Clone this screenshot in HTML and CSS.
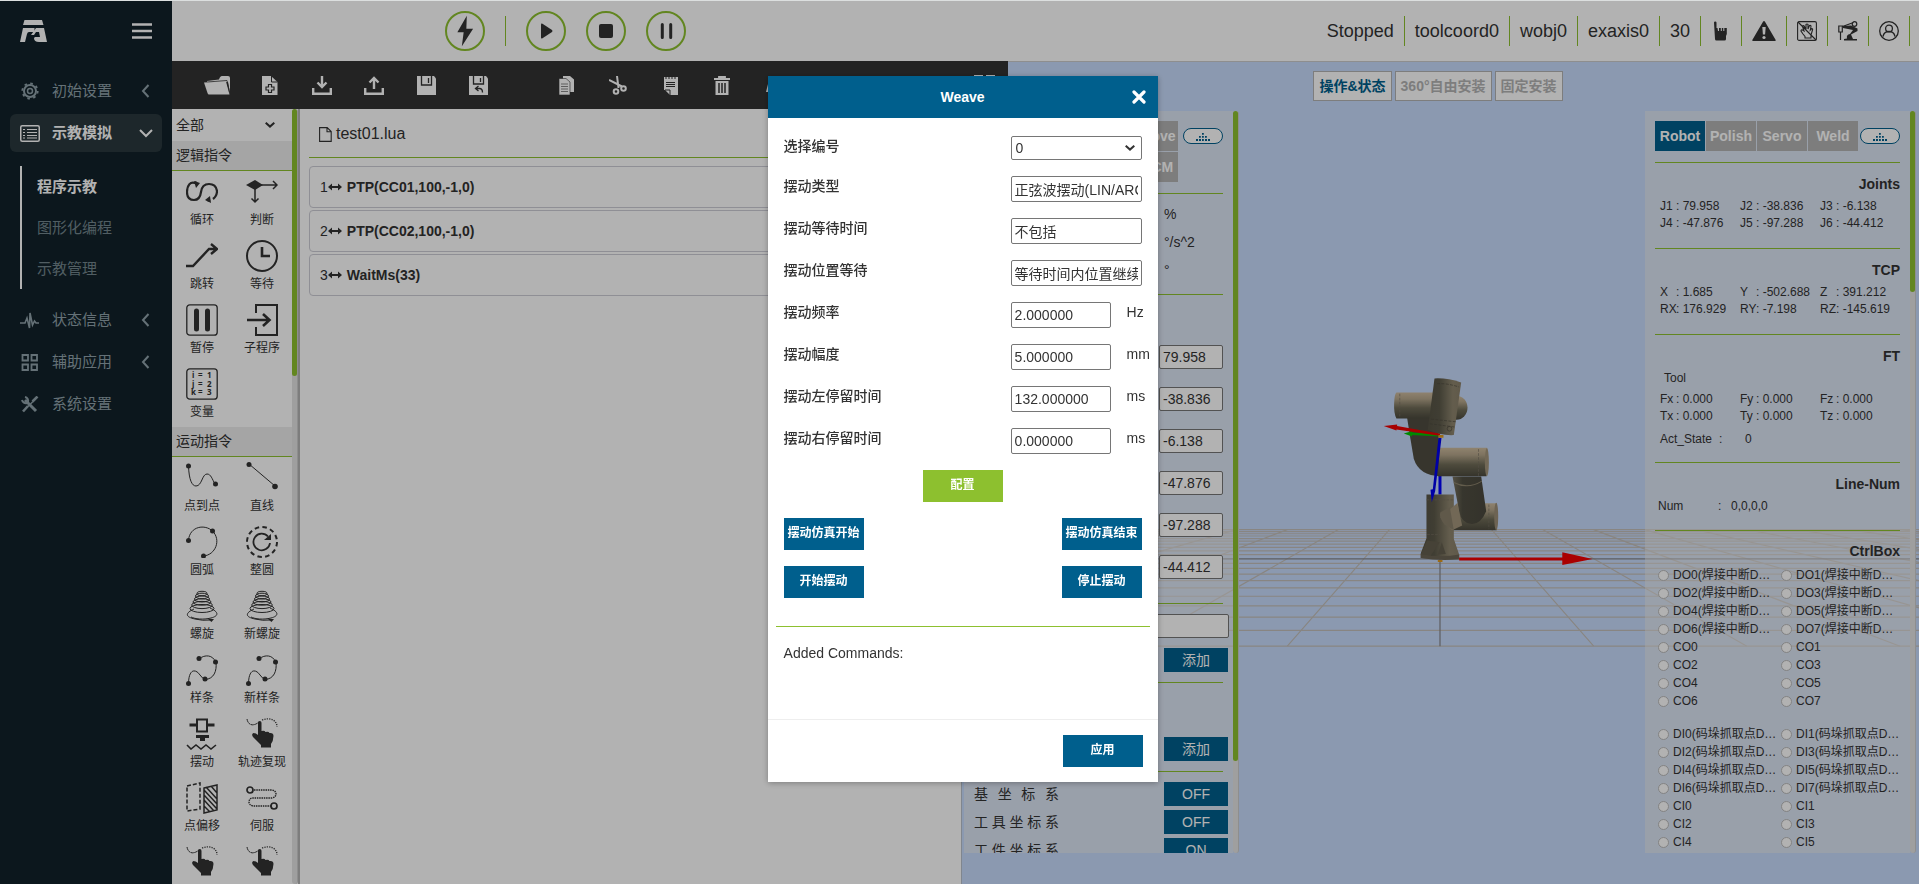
FILE: index.html
```html
<!DOCTYPE html>
<html lang="zh-CN">
<head>
<meta charset="utf-8">
<title>程序示教</title>
<link rel="stylesheet" href="styles.css">
</head>
<body>
<svg class="sprite" aria-hidden="true">
  <symbol id="chev-left" viewBox="0 0 12 14"><path d="M8.500 1 3 7l5.500 6" fill="none" stroke="currentColor" stroke-width="2"/></symbol>
  <symbol id="chev-down" viewBox="0 0 14 10"><path d="M1 2l6 6 6-6" fill="none" stroke="currentColor" stroke-width="2"/></symbol>
  <symbol id="select-arrow" viewBox="0 0 10 6"><path d="M.7.8 5 4.600 9.300.8" fill="none" stroke="currentColor" stroke-width="2"/></symbol>
  <symbol id="finger-path" viewBox="0 0 32 32"><path d="M1 1c1 6 6 8 12 3" fill="none" stroke="currentColor" stroke-width="1" stroke-dasharray="3 .5"/><path d="M16 2c8-3 15 0 15 7" fill="none" stroke="currentColor" stroke-width="1.300" stroke-dasharray="1.200 1.200"/><path d="M12 5q0-2 1.800-2T15.500 5v8q3-1 4 1 3-1 4 1 4-.5 4 3-.2 5-2.500 8v3.500H15V27q-4-4-8-8-2-3 .5-4 2 0 4.500 2z" fill="currentColor"/></symbol>
  <symbol id="spiral" viewBox="0 0 32 32"><g fill="none" stroke="currentColor"><ellipse cx="16" cy="3.500" rx="5" ry="2.200"/><ellipse cx="16" cy="6" rx="6.500" ry="2.800"/><ellipse cx="16" cy="9" rx="7.500" ry="3"/><ellipse cx="16" cy="12" rx="9" ry="3.200"/><ellipse cx="16" cy="15" rx="10.300" ry="3.600"/><ellipse cx="16" cy="18.500" rx="12" ry="4"/><path d="M8 19C-1 23-1 27 9 29q8 2 15 1M24 18c9 4 9 8 1 10-8 2-16 1-20-1"/></g><path d="M22 29h6l-2.500 3z" fill="currentColor"/></symbol>
  <symbol id="spline" viewBox="0 0 32 32"><g fill="none" stroke="currentColor"><path d="M2.500 29C3 14 10 15 14 21q3 4 5 4.500C28 25 31 17 30 8"/><path d="M13 5c6-5 14-4 16.500 3"/></g><g fill="currentColor"><circle cx="2.500" cy="29.500" r="2.500"/><circle cx="19" cy="25" r="2.500"/><circle cx="29.500" cy="8" r="2.500"/><circle cx="13" cy="4.500" r="2.500"/></g></symbol>
  <symbol id="dots" viewBox="0 0 14 9"><g fill="currentColor"><path d="M0 7h2v2H0zM3 7h2v2H3zM6 7h1.800v2H6zM9 7h2v2H9zM12 7h2v2h-2zM3 4h1.800v1.800H3zM6 4h1.800v1.800H6zM9 4h1.800v1.800H9zM6 1h1.800v1.800H6z"/></g></symbol>
</svg>

<div class="app">
  <nav class="sidebar">
    <header class="brand">
      <svg width="27" height="23" viewBox="0 0 27 23"><g fill="currentColor"><path d="M4.500 0h17.500l1.500 5H3z"/><path d="M3 8h11.500v4H9q-1.500 0-2 2l-2 8H0z"/><path d="M16 8h8l3 14h-8q-5 0-5-4l1-1h5l-1-5h-3l-2 3h-3z"/></g></svg>
      <button class="burger" aria-label="菜单"><svg width="20" height="16" viewBox="0 0 20 16"><path d="M0 1.500h20M0 8h20M0 14.500h20" stroke="currentColor" stroke-width="2.600"/></svg></button>
    </header>
    <ul class="menu">
      <li><a href="#" class="menu-link"><svg width="18" height="18" viewBox="0 0 18 18"><circle cx="9" cy="9" r="6" fill="none" stroke="currentColor" stroke-width="2"/><circle cx="9" cy="9" r="2.500" fill="none" stroke="currentColor" stroke-width="1.500"/><circle cx="9" cy="9" r="7.700" fill="none" stroke="currentColor" stroke-width="1.800" stroke-dasharray="2.600 3.450"/></svg><span>初始设置</span><svg class="caret" width="12" height="14"><use href="#chev-left"/></svg></a></li>
      <li><a href="#" class="menu-link active"><svg width="20" height="17" viewBox="0 0 20 17"><rect x=".75" y=".75" width="18.500" height="15.500" rx="1.500" fill="none" stroke="currentColor" stroke-width="1.500"/><path d="M3 4.500h2M3 7.500h2M3 10.500h2M3 13h2M7 4.500h10M7 7.500h10M7 10.500h10M7 13h10" stroke="currentColor" stroke-width="1.100"/></svg><span>示教模拟</span><svg class="caret" width="14" height="10"><use href="#chev-down"/></svg></a>
        <ul class="submenu">
          <li><a href="#" class="current">程序示教</a></li>
          <li><a href="#">图形化编程</a></li>
          <li><a href="#">示教管理</a></li>
        </ul>
      </li>
      <li><a href="#" class="menu-link"><svg width="20" height="17" viewBox="0 0 20 17"><path d="M0 11h5l2-5 2.500 10L10 1l2.500 12 2-4 1.500 2h3" fill="none" stroke="currentColor" stroke-width="1.600"/></svg><span>状态信息</span><svg class="caret" width="12" height="14"><use href="#chev-left"/></svg></a></li>
      <li><a href="#" class="menu-link"><svg width="18" height="17" viewBox="0 0 18 17"><path d="M1.500 1h5.500v5.500H1.500zM10.500 1H16v5.500h-5.500zM1.500 10.500h5.500V16H1.500zM10.500 10.500H16V16h-5.500z" fill="none" stroke="currentColor" stroke-width="1.800"/></svg><span>辅助应用</span><svg class="caret" width="12" height="14"><use href="#chev-left"/></svg></a></li>
      <li><a href="#" class="menu-link"><svg width="18" height="17" viewBox="0 0 18 17"><path d="M4 4l11 11" stroke="currentColor" stroke-width="3"/><path d="M1 4a4 4 0 0 0 5 3M4 1a4 4 0 0 1 3 5" stroke="currentColor" stroke-width="2" fill="none"/><path d="M16.500.5l-5 5M7 10l-5 5.500" stroke="currentColor" stroke-width="2.600"/><path d="M12 5.500l-5 5" stroke="currentColor" stroke-width="1.400"/></svg><span>系统设置</span></a></li>
    </ul>
  </nav>

  <div class="main">
    <header class="topbar">
      <div class="run-controls">
        <button class="round" aria-label="使能"><svg width="18" height="34" viewBox="0 0 20 36"><path d="M12 1 1.500 19.500h7L6.500 35 19 15.500h-7.500z" fill="currentColor"/></svg></button>
        <i class="sep"></i>
        <button class="round" aria-label="运行"><svg width="13" height="16" viewBox="0 0 13 16"><path d="M1 1.500Q1 0 2.500.8L12 7q1 1 0 2l-9.500 6.200Q1 16 1 14.500z" fill="currentColor"/></svg></button>
        <button class="round" aria-label="停止"><svg width="14" height="14" viewBox="0 0 14 14"><rect width="14" height="14" rx="2" fill="currentColor"/></svg></button>
        <button class="round" aria-label="暂停"><svg width="13" height="16" viewBox="0 0 13 16"><path d="M2.300 1.500v13M10.700 1.500v13" stroke="currentColor" stroke-width="3" stroke-linecap="round"/></svg></button>
      </div>
      <ul class="status">
        <li>Stopped</li><li>toolcoord0</li><li>wobj0</li><li>exaxis0</li><li>30</li>
        <li class="ico"><svg width="20" height="20" viewBox="0 0 20 20"><path d="M3 1.500Q3 .5 4.200.5T5.500 1.500V7l1 0 .5 3h1V7h1.800v3h1V7h1.500v3h1V7h2.500v6L15 15v3q0 1.500-1.500 1.500h-8Q4 19.500 4 18z" fill="currentColor"/></svg></li>
        <li class="ico wide"><svg width="24" height="20" viewBox="0 0 24 20"><path d="M12 0q.6 0 1 .7L23.700 19q.3 1-.7 1H1q-1 0-.7-1L11 .7Q11.400 0 12 0z" fill="currentColor"/><path d="M10.300 6h3.400l-.6 7.500h-2.200z" fill="#fff"/><circle cx="12" cy="16.500" r="1.600" fill="#fff"/></svg></li>
        <li class="ico"><svg width="20" height="20" viewBox="0 0 20 20"><g fill="none" stroke="currentColor" stroke-width="1.100"><rect x=".6" y=".6" width="18.800" height="18.800" rx="1.500"/><path d="M1 1l18 18M6 13l-2-3q0-1.500 1.500-1L7 10 5.500 5.500Q6 4 7.200 5L9 8.500V3.500q1-1 2 0V8l1.500-3.500Q14 4 14 5.500L13.300 9l1.500-1.500q1.200 0 .7 1.500L14 14v3H8v-1.500z"/></g></svg></li>
        <li class="ico"><svg width="20" height="20" viewBox="0 0 20 20"><g fill="none" stroke="currentColor" stroke-width="1.200"><path d="M.8 5h3.500v6H.8zM2.500 11v8M4.500 5.500l11-4"/><circle cx="16.500" cy="3" r="2.300"/></g><path d="M5 5l8-.5 6.500 3V10L13 13.500l2 4.500h4v1.500H6V18l3-.5q-1-4 3-4.500l3-4-10-2z" fill="currentColor"/></svg></li>
        <li class="ico"><svg width="20" height="20" viewBox="0 0 20 20"><g fill="none" stroke="currentColor" stroke-width="1.300"><circle cx="10" cy="10" r="9.300"/><circle cx="10" cy="7.500" r="3.400"/><path d="M4 15.500q1-5 6-5t6 5"/></g></svg></li>
      </ul>
    </header>

    <div class="workspace">
      <section class="editor">
        <div class="toolbar">
          <div class="tools">
            <button class="open" aria-label="打开"><svg width="26" height="19" viewBox="0 0 26 19"><path d="M3 5l12-1.500Q16 0 18 0h6q2 0 2 2v15l-2-11-21 1z" fill="currentColor"/><path d="M0 6.500L22 5.500 25.500 18.500H5Q4 18.500 3.500 17z" fill="currentColor"/><path d="M3 6l20-1.500L25.500 16" stroke="#333" stroke-width=".8" fill="none"/></svg></button>
            <button aria-label="新建"><svg width="16" height="19" viewBox="0 0 16 19"><path d="M0 0h9l6.500 6V19H0z" fill="currentColor"/><path d="M9.500 0v6h6" fill="none" stroke="#333"/><path d="M6.500 8.500h3v2.500h2.500v3H9.500v2.500h-3V14H4v-3h2.500z" fill="none" stroke="#333" stroke-width="1.200"/></svg></button>
            <button aria-label="导入"><svg width="20" height="19" viewBox="0 0 20 19"><path d="M1.200 12v5.800h17.600V12M10 0v10M5.500 6.500L10 11l4.500-4.500" fill="none" stroke="currentColor" stroke-width="2.400"/></svg></button>
            <button aria-label="导出"><svg width="20" height="19" viewBox="0 0 20 19"><path d="M1.200 12v5.800h17.600V12M10 13V2.500M5.500 6.500L10 2l4.500 4.500" fill="none" stroke="currentColor" stroke-width="2.400"/></svg></button>
            <button aria-label="保存"><svg width="19" height="19" viewBox="0 0 19 19"><path d="M0 0h17l2 2.500V19H0z" fill="currentColor"/><path d="M4.500 0v9h10V0M11.500 2v5" fill="none" stroke="#333" stroke-width="1.300"/></svg></button>
            <button aria-label="另存为"><svg width="19" height="19" viewBox="0 0 19 19"><path d="M0 0h17l2 2.500V19H0z" fill="currentColor"/><path d="M4.500 0v8h10V0M11.500 2v4M6.500 12.500h4q3 0 3 4M9.500 10l-3 2.500 3 2.500" fill="none" stroke="#333" stroke-width="1.300"/></svg></button>
          </div>
          <i class="tool-sep"></i>
          <div class="tools">
            <button aria-label="复制"><svg width="15" height="19" viewBox="0 0 15 19"><path d="M4 0h7l4 3.500V16H4z" fill="currentColor"/><path d="M0 2.500h7l4 3.500v13H0z" fill="currentColor" stroke="#333" stroke-width=".6"/><path d="M2 8h7M2 10.500h7M2 13h7M2 15.500h7" stroke="#555" stroke-width=".7"/></svg></button>
            <button aria-label="剪切"><svg width="18" height="19" viewBox="0 0 18 19"><g fill="none" stroke="currentColor" stroke-width="2"><path d="M8 0l1.500 12M0 4l13 6.500"/><circle cx="7" cy="15.500" r="2.300"/><circle cx="14.500" cy="12.500" r="2.300"/></g></svg></button>
            <button aria-label="粘贴"><svg width="15" height="19" viewBox="0 0 15 19"><path d="M1 1h14v18H7l-5-5H1z" fill="currentColor"/><path d="M3 0v3M6 0v3M9 0v3M12 0v3M3 6.500h9M3 8.500h9M3 10.500h9M2 14h5v5" stroke="#333" fill="none"/></svg></button>
            <button aria-label="删除"><svg width="16" height="19" viewBox="0 0 16 19"><path d="M0 3h16M5 2.500V1h6v1.500" stroke="currentColor" stroke-width="1.800" fill="none"/><path d="M1.500 5h13v14h-13z" fill="currentColor"/><path d="M5 7v10M8 7v10M11 7v10" stroke="#333" stroke-width="1.500"/></svg></button>
            <button aria-label="撤销"><svg width="16" height="19" viewBox="0 0 16 19"><path d="M8 0l4 4H4zM2 8q6-6 12 0v8H0z" fill="currentColor"/></svg></button>
            <button aria-label="列表"><svg width="14" height="19" viewBox="0 0 14 19"><path d="M1 1h12v17H1z" stroke="currentColor" stroke-width="2" fill="none"/></svg></button>
          </div>
          <i class="tool-sep"></i>
          <div class="tools last">
            <button aria-label="上移"><svg width="16" height="19" viewBox="0 0 16 19"><path d="M8 0l5 6H3zM7 5h2v14H7z" fill="currentColor"/></svg></button>
            <button aria-label="布局"><svg width="21" height="21" viewBox="0 0 21 21"><path d="M0 0h9v8H0zM12 0h9v8h-9zM0 12h9v8H0zM12 12h9v8h-9z" fill="currentColor"/></svg></button>
          </div>
        </div>

        <div class="editor-body">
          <div class="palette">
            <div class="select-wrap filter">
              <select aria-label="指令分类"><option>全部</option></select>
              <svg width="10" height="6"><use href="#select-arrow"/></svg>
            </div>
            <h2>逻辑指令</h2>
            <div class="commands">
              <button><svg viewBox="0 0 32 32"><path d="M11 8C4 4 1 10 1 16q0 8 7 8 6 0 7-8 1-8 8-8 7 0 8 7 0 5-4 8M11 7.500L9 6M21 24l3 1" fill="none" stroke="currentColor" stroke-width="2.200"/><path d="M8 5l6 2-4 5zM24 20l-5 4 6 3z" fill="currentColor"/></svg>循环</button>
              <button><svg viewBox="0 0 32 32"><path d="M9 4l8 5-8 5-9-5z" fill="currentColor"/><path d="M15 9h16M27 5l4 4-4 4M9 13v13M5.500 22.500L9 26l3.500-3.500" fill="none" stroke="currentColor" stroke-width="1.500"/></svg>判断</button>
              <button><svg viewBox="0 0 32 32"><path d="M0 26h7L23 9h7M25 4l6 5-6 5" fill="none" stroke="currentColor" stroke-width="2.400"/></svg>跳转</button>
              <button><svg viewBox="0 0 32 32"><circle cx="16" cy="16" r="15" fill="none" stroke="currentColor" stroke-width="2"/><path d="M16 7v9h8" fill="none" stroke="currentColor" stroke-width="2.600"/></svg>等待</button>
              <button><svg viewBox="0 0 32 32"><rect x=".8" y=".8" width="30.400" height="30.400" rx="3" fill="none" stroke="currentColor" stroke-width="1.300"/><path d="M10.500 7v18M21.500 7v18" stroke="currentColor" stroke-width="5" stroke-linecap="round"/></svg>暂停</button>
              <button><svg viewBox="0 0 32 32"><path d="M10 9V1h21v30H10v-8" fill="none" stroke="currentColor" stroke-width="2"/><path d="M1 16h22M17 10l6.500 6-6.500 6" fill="none" stroke="currentColor" stroke-width="2.600"/></svg>子程序</button>
              <button><svg viewBox="0 0 32 32"><rect x=".8" y=".8" width="30.400" height="30.400" rx="3" fill="none" stroke="currentColor" stroke-width="1.300"/><g font-family="Noto Sans" font-size="8" font-weight="700" fill="currentColor"><text x="6" y="10">i</text><text x="12" y="10">=</text><text x="21" y="10">1</text><text x="6" y="19">j</text><text x="12" y="19">=</text><text x="21" y="19">2</text><text x="5" y="27">k</text><text x="12" y="27">=</text><text x="21" y="27">3</text></g></svg>变量</button>
            </div>
            <h2>运动指令</h2>
            <div class="commands">
              <button><svg viewBox="0 0 32 32"><path d="M2.500 4C3 18 6 24 10 24c6 0 6-12 11-12 4 0 5 5 8 10" fill="none" stroke="currentColor"/><circle cx="2.500" cy="4" r="2.500" fill="currentColor"/><circle cx="29.500" cy="22" r="2.500" fill="currentColor"/></svg>点到点</button>
              <button><svg viewBox="0 0 32 32"><path d="M3 2l26 22" stroke="currentColor"/><circle cx="3" cy="2.500" r="2.500" fill="currentColor"/><circle cx="29" cy="24.500" r="2.800" fill="currentColor"/></svg>直线</button>
              <button><svg viewBox="0 0 32 32"><path d="M2.500 14C4 0 19-2 26.500 5c9 9 3 24-9 25" fill="none" stroke="currentColor"/><circle cx="2.500" cy="14.500" r="2.500" fill="currentColor"/><circle cx="26.500" cy="5" r="2.500" fill="currentColor"/><circle cx="17.500" cy="30" r="2.500" fill="currentColor"/></svg>圆弧</button>
              <button><svg viewBox="0 0 32 32"><circle cx="16" cy="16" r="15" fill="none" stroke="currentColor" stroke-width="2" stroke-dasharray="4.500 3.350"/><path d="M22 10.500A8.300 8.300 0 1 0 24 17" fill="none" stroke="currentColor" stroke-width="1.800"/><path d="M25 8v6h-7z" fill="currentColor"/></svg>整圆</button>
              <button><svg><use href="#spiral"/></svg>螺旋</button>
              <button><svg><use href="#spiral"/></svg>新螺旋</button>
              <button><svg><use href="#spline"/></svg>样条</button>
              <button><svg><use href="#spline"/></svg>新样条</button>
              <button><svg viewBox="0 0 32 32"><path d="M11 1.500h10v12H11z" fill="none" stroke="currentColor" stroke-width="2"/><path d="M3.500 7H10M22 7h6.500" stroke="currentColor" stroke-width="3"/><path d="M10 17h13v3h-4v3h-5v-3h-4z" fill="currentColor"/><path d="M1 27l4 4 5-4 5 4 5-4 5 4 5-4" fill="none" stroke="currentColor" stroke-width="1.600"/></svg>摆动</button>
              <button><svg><use href="#finger-path"/></svg>轨迹复现</button>
              <button><svg viewBox="0 0 32 32"><path d="M1 4l13-3v26L1 29z" fill="none" stroke="currentColor" stroke-width="1.500" stroke-dasharray="4 2"/><path d="M18 6l13-3v25l-13 3zM18 8l13 14M18 13l13 14M18 18l10 11M18 24l6 6M20 5l11 12M25 4l6 7" fill="none" stroke="currentColor" stroke-width="1.500"/></svg>点偏移</button>
              <button><svg viewBox="0 0 32 32"><circle cx="4" cy="8" r="3" fill="none" stroke="currentColor" stroke-width="1.700"/><circle cx="28" cy="24" r="3" fill="none" stroke="currentColor" stroke-width="1.700"/><path d="M8 8h18q4 1 4 4t-4 4H6q-3 1-3 4t4 4h18" fill="none" stroke="currentColor" stroke-width="1.400" stroke-dasharray="1.500 .8"/></svg>伺服</button>
              <button aria-label="轨迹"><svg><use href="#finger-path"/></svg></button>
              <button aria-label="轨迹"><svg><use href="#finger-path"/></svg></button>
            </div>
          </div>
          <div class="track"><div class="thumb thumb-palette"></div></div>
          <div class="code">
            <h1 class="file"><svg width="13" height="15" viewBox="0 0 13 15"><path d="M.6.6h7.600l4 4v9.800H.6zM8 .6v4.200h4.200" fill="none" stroke="currentColor" stroke-width="1.100"/></svg>test01.lua</h1>
            <ol class="lines">
              <li>1<svg width="14" height="8"><path d="M2 4h10" stroke="currentColor" stroke-width="2"/><path d="M4 .5v7L0 4zM10 .5v7L14 4z" fill="currentColor"/></svg><b>PTP(CC01,100,-1,0)</b></li>
              <li>2<svg width="14" height="8"><path d="M2 4h10" stroke="currentColor" stroke-width="2"/><path d="M4 .5v7L0 4zM10 .5v7L14 4z" fill="currentColor"/></svg><b>PTP(CC02,100,-1,0)</b></li>
              <li>3<svg width="14" height="8"><path d="M2 4h10" stroke="currentColor" stroke-width="2"/><path d="M4 .5v7L0 4zM10 .5v7L14 4z" fill="currentColor"/></svg><b>WaitMs(33)</b></li>
            </ol>
          </div>
        </div>
      </section>

      <section class="stage">
        <svg class="scene" viewBox="0 0 958 821" preserveAspectRatio="xMidYMid slice" aria-hidden="true">
          <defs>
            <linearGradient id="tubeH" x1="0" y1="0" x2="0" y2="1"><stop offset="0" stop-color="#cdbb9e"/><stop offset=".25" stop-color="#b5a68b"/><stop offset=".6" stop-color="#6f6b57"/><stop offset="1" stop-color="#4d4b3f"/></linearGradient>
            <linearGradient id="tubeV" x1="0" y1="0" x2="1" y2="0"><stop offset="0" stop-color="#565345"/><stop offset=".35" stop-color="#5c594a"/><stop offset=".75" stop-color="#8f866f"/><stop offset="1" stop-color="#8a806a"/></linearGradient>
            <linearGradient id="tubeD" x1="0" y1="0" x2="1" y2="0"><stop offset="0" stop-color="#787260"/><stop offset=".3" stop-color="#504e42"/><stop offset="1" stop-color="#4b493e"/></linearGradient>
          </defs>
          <g stroke="#c3bfba" stroke-width="1.200" fill="none">
            <path d="M-600 583.500H1600M-600 567.600H1600M-600 554.400H1600M-600 543.200H1600M-600 533.600H1600M-600 525.300H1600M-600 518H1600M-600 511.500H1600M-600 505.800H1600M-600 500.800H1600M-600 492H1600M-600 488.200H1600M-600 484.800H1600M-600 481.500H1600M-600 478.600H1600M-600 476H1600M-600 473.400H1600M-600 471.200H1600M-600 469H1600M-600 467H1600"/>
            <path d="M428 467L326 583.500M377 467L173 583.500M326 467L20 583.500M275 467L-133 583.500M224 467L-286 583.500M173 467L-439 583.500M122 467L-592 583.500M71 467L-745 583.500M20 467L-898 583.500M530 467L632 583.500M581 467L785 583.500M632 467L938 583.500M683 467L1091 583.500M734 467L1244 583.500M785 467L1397 583.500M836 467L1550 583.500M887 467L1703 583.500M938 467L1856 583.500"/>
          </g>
          <path d="M-600 496.200H1600M478.500 467V583.500" stroke="#85858a" stroke-width="1.200" fill="none"/>
          <g transform="translate(279 298) scale(.3333)">
            <path d="M594 346h9v56h-9z" fill="#00f"/>
            <ellipse cx="648" cy="142" rx="33" ry="36" fill="url(#tubeH)"/>
            <path d="M500 172L510 236 520 295Q536 346 600 347L598 262 588 172z" fill="#504d41"/>
            <path d="M468 96H582V174H468Q460 160 461 130T468 96z" fill="url(#tubeH)"/>
            <path d="M598 262H740Q746 300 738 347H592z" fill="url(#tubeH)"/><ellipse cx="739" cy="305" rx="6" ry="42" fill="#a4967c"/>
            <path d="M600 500L650 428H768Q775 466 768 509H635z" fill="url(#tubeH)"/><ellipse cx="767" cy="468" rx="6" ry="41" fill="#9c8f77"/>
            <path d="M558 402H640V535L656 582V596L541 592V578L558 533z" fill="url(#tubeV)"/>
            <path d="M600 470L650 428 665 495 635 509z" fill="#a4967c"/>
            <path d="M640 509L612 492Q594 470 600 455L628 440z" fill="#8a806b"/>
            <path d="M598 545L570 586 541 580 560 540zM604 545L616 580 592 582z" fill="#655f4f"/>
            <path d="M541 580Q598 592 656 582V596Q598 602 541 592z" fill="#6c6555"/>
            <path d="M636 348H722L737 452Q720 492 693 490 662 488 656 452z" fill="url(#tubeD)"/>
            <path d="M640 366Q682 388 724 362" fill="none" stroke="#8f866f" stroke-width="3"/>
            <path d="M558 418H640M560 522H598M714 266V346M745 432V506M478 100V172" stroke="#777060" stroke-width="2" stroke-dasharray="8 4" fill="none"/>
            <path d="M582 54Q620 52 662 66L640 224Q600 226 562 208z" fill="url(#tubeV)"/>
            <path d="M590 70Q620 68 656 80M572 176L646 184M568 190L644 200" fill="none" stroke="#4d4a3e" stroke-width="2" stroke-dasharray="9 4"/><circle cx="627" cy="205" r="7" fill="none" stroke="#4d4a3e" stroke-width="2"/>
            <path d="M598 228L515 224V228L490 219 516 212V216L598 220z" fill="#00c400"/>
            <path d="M596 226L468 207V210L430 197 470 192V197L600 220z" fill="#f00000"/>
            <path d="M594 232L603 233 584 392 574 425 570 388 577 386z" fill="#0000ee"/>
            <path d="M594 224h15v8h-15zM592 598h14v6h-14z" fill="#e09a20"/>
            <path d="M656 591H965V575L1056 595 965 613V600H656z" fill="#f40000"/>
          </g>
        </svg>

        <div class="panel-wrap">
          <div class="panel operate">
            <div class="tabs-row">
              <div class="tabs"><button>EMove</button><button>RTCM</button></div>
              <button class="pill" aria-label="收起"><svg width="14" height="9"><use href="#dots"/></svg></button>
            </div>
            <hr>
            <ul class="units"><li>%</li><li>°/s^2</li><li>°</li></ul>
            <hr>
            <div class="joint-inputs">
              <input aria-label="J1" value="79.958"><input aria-label="J2" value="-38.836"><input aria-label="J3" value="-6.138"><input aria-label="J4" value="-47.876"><input aria-label="J5" value="-97.288"><input aria-label="J6" value="-44.412">
            </div>
            <hr>
            <input class="name" aria-label="名称">
            <button class="small">添加</button>
            <hr>
            <button class="small second">添加</button>
            <hr>
            <div class="toggle-row"><span>基坐标系</span><button class="small">OFF</button></div>
            <div class="toggle-row"><span>工具坐标系</span><button class="small">OFF</button></div>
            <div class="toggle-row"><span>工件坐标系</span><button class="small">ON</button></div>
          </div>
          <div class="track"><div class="thumb thumb-operate"></div></div>
        </div>

        <div class="modes">
          <button class="on">操作&amp;状态</button><button>360°自由安装</button><button>固定安装</button>
        </div>

        <div class="panel-wrap">
          <div class="panel monitor">
            <div class="tabs-row">
              <div class="tabs"><button class="on">Robot</button><button>Polish</button><button>Servo</button><button>Weld</button></div>
              <button class="pill" aria-label="收起"><svg width="14" height="9"><use href="#dots"/></svg></button>
            </div>
            <section><h3>Joints</h3>
              <dl class="trio"><div><dt>J1</dt><dd>79.958</dd></div><div><dt>J2</dt><dd>-38.836</dd></div><div><dt>J3</dt><dd>-6.138</dd></div><div><dt>J4</dt><dd>-47.876</dd></div><div><dt>J5</dt><dd>-97.288</dd></div><div><dt>J6</dt><dd>-44.412</dd></div></dl>
            </section>
            <section><h3>TCP</h3>
              <dl class="trio"><div><dt>X</dt><dd>1.685</dd></div><div><dt>Y</dt><dd>-502.688</dd></div><div><dt>Z</dt><dd>391.212</dd></div><div><dt>RX</dt><dd>176.929</dd></div><div><dt>RY</dt><dd>-7.198</dd></div><div><dt>RZ</dt><dd>-145.619</dd></div></dl>
            </section>
            <section class="ft"><h3>FT</h3>
              <p class="tool">Tool</p>
              <dl class="trio"><div><dt>Fx</dt><dd>0.000</dd></div><div><dt>Fy</dt><dd>0.000</dd></div><div><dt>Fz</dt><dd>0.000</dd></div><div><dt>Tx</dt><dd>0.000</dd></div><div><dt>Ty</dt><dd>0.000</dd></div><div><dt>Tz</dt><dd>0.000</dd></div></dl>
              <dl class="act"><dt>Act_State</dt><dd>0</dd></dl>
            </section>
            <section class="num"><h3>Line-Num</h3>
              <dl class="line-num"><dt>Num</dt><dd>0,0,0,0</dd></dl>
            </section>
            <section class="box"><h3>CtrlBox</h3>
              <div class="io">
                <label><input type="radio">DO0(焊接中断D…</label><label><input type="radio">DO1(焊接中断D…</label>
                <label><input type="radio">DO2(焊接中断D…</label><label><input type="radio">DO3(焊接中断D…</label>
                <label><input type="radio">DO4(焊接中断D…</label><label><input type="radio">DO5(焊接中断D…</label>
                <label><input type="radio">DO6(焊接中断D…</label><label><input type="radio">DO7(焊接中断D…</label>
                <label><input type="radio">CO0</label><label><input type="radio">CO1</label>
                <label><input type="radio">CO2</label><label><input type="radio">CO3</label>
                <label><input type="radio">CO4</label><label><input type="radio">CO5</label>
                <label><input type="radio">CO6</label><label><input type="radio">CO7</label>
              </div>
              <div class="io">
                <label><input type="radio">DI0(码垛抓取点D…</label><label><input type="radio">DI1(码垛抓取点D…</label>
                <label><input type="radio">DI2(码垛抓取点D…</label><label><input type="radio">DI3(码垛抓取点D…</label>
                <label><input type="radio">DI4(码垛抓取点D…</label><label><input type="radio">DI5(码垛抓取点D…</label>
                <label><input type="radio">DI6(码垛抓取点D…</label><label><input type="radio">DI7(码垛抓取点D…</label>
                <label><input type="radio">CI0</label><label><input type="radio">CI1</label>
                <label><input type="radio">CI2</label><label><input type="radio">CI3</label>
                <label><input type="radio">CI4</label><label><input type="radio">CI5</label>
              </div>
            </section>
          </div>
          <div class="track"><div class="thumb thumb-monitor"></div></div>
        </div>
      </section>
    </div>
  </div>
</div>

<div class="backdrop"></div>

<div class="modal" role="dialog" aria-labelledby="weave-title">
  <header class="modal-head"><h2 id="weave-title">Weave</h2>
    <button class="close" aria-label="关闭"><svg width="14" height="14" viewBox="0 0 14 14"><path d="M2 2l10 10M12 2L2 12" stroke="currentColor" stroke-width="3.200" stroke-linecap="round"/></svg></button>
  </header>
  <form class="modal-body">
    <div class="row"><label for="w0">选择编号</label><div class="field"><div class="select-wrap number"><select id="w0"><option>0</option></select><svg width="10" height="6"><use href="#select-arrow"/></svg></div></div></div>
    <div class="row"><label for="w1">摆动类型</label><div class="field"><input id="w1" class="long" value="正弦波摆动(LIN/ARC)"></div></div>
    <div class="row"><label for="w2">摆动等待时间</label><div class="field"><input id="w2" class="long" value="不包括"></div></div>
    <div class="row"><label for="w3">摆动位置等待</label><div class="field"><input id="w3" class="long" value="等待时间内位置继续移动"></div></div>
    <div class="row"><label for="w4">摆动频率</label><div class="field"><input id="w4" value="2.000000"><span>Hz</span></div></div>
    <div class="row"><label for="w5">摆动幅度</label><div class="field"><input id="w5" value="5.000000"><span>mm</span></div></div>
    <div class="row"><label for="w6">摆动左停留时间</label><div class="field"><input id="w6" value="132.000000"><span>ms</span></div></div>
    <div class="row"><label for="w7">摆动右停留时间</label><div class="field"><input id="w7" value="0.000000"><span>ms</span></div></div>
    <div class="actions center"><button type="button" class="btn green">配置</button></div>
    <div class="actions"><button type="button" class="btn">摆动仿真开始</button><button type="button" class="btn">摆动仿真结束</button></div>
    <div class="actions"><button type="button" class="btn">开始摆动</button><button type="button" class="btn">停止摆动</button></div>
    <hr>
    <p class="added">Added Commands:</p>
  </form>
  <footer class="modal-foot"><button type="button" class="btn">应用</button></footer>
</div>
</body>
</html>
```
FILE: styles.css
```css
* { box-sizing: border-box; margin: 0; padding: 0; }

:root {
  --green: #8dc02f;
  --blue: #005f8d;
  --ink: #333;
}

body {
  font: 14px/20px "Liberation Sans", "Noto Sans CJK SC", sans-serif;
  color: var(--ink);
  background: #fff;
  overflow: hidden;
}

button, input, select { font: inherit; color: inherit; border-radius: 0; }
button { background: none; border: 0; cursor: pointer; }
ul, ol { list-style: none; }
a { color: inherit; text-decoration: none; }
hr { border: 0; border-top: 1px solid var(--green); }
svg { display: block; flex: none; }
.sprite { position: absolute; width: 0; height: 0; }

.app {
  display: flex;
  height: 100vh;
  border-top: 1px solid #dcdfdf;
}

/* Sidebar */
.sidebar {
  flex: 0 0 172px;
  background: #12222a;
  color: #91a3ab;
}
.brand {
  display: flex;
  align-items: center;
  justify-content: space-between;
  height: 60px;
  padding: 0 20px;
  color: #fff;
}
.burger { color: #fff; }
.menu {
  padding: 11px 10px;
  display: flex;
  flex-direction: column;
  gap: 4px;
}
.menu-link {
  display: grid;
  grid-template-columns: 20px 1fr 14px;
  column-gap: 12px;
  align-items: center;
  height: 38px;
  padding: 0 9px 0 10px;
  border-radius: 6px;
  font-size: 15px;
}
.menu-link > svg { justify-self: center; }
.menu-link.active { background: #2a393e; color: #fff; font-weight: 700; }
.submenu {
  margin: 14px 0 8px 10px;
  padding-left: 15px;
  border-left: 2px solid #fff;
  color: #75878f;
  font-size: 15px;
}
.submenu a { display: block; line-height: 41px; }
.submenu .current { color: #fff; font-weight: 700; }

/* Top bar */
.main { flex: 1; min-width: 0; display: flex; flex-direction: column; }
.topbar {
  display: flex;
  flex: 0 0 60px;
  align-items: center;
  justify-content: space-between;
  padding: 0 9px 0 273px;
}
.run-controls { display: flex; align-items: center; gap: 20px; }
.round {
  display: grid;
  place-items: center;
  width: 40px;
  height: 40px;
  border: 2px solid var(--green);
  border-radius: 50%;
}
.sep { width: 1px; height: 30px; background: var(--green); }
.status { display: flex; font-size: 18px; }
.status li {
  display: flex;
  align-items: center;
  height: 30px;
  padding: 0 10px;
  border-right: 1px solid var(--green);
}

/* Workspace */
.workspace {
  flex: 1;
  min-height: 0;
  display: grid;
  grid-template-columns: 789fr 958fr;
}
.editor { display: flex; flex-direction: column; min-width: 0; min-height: 0; }
.toolbar {
  position: relative;
  z-index: 1;
  display: flex;
  align-items: center;
  flex: 0 0 48px;
  width: 106%;
  padding-left: 17px;
  background: #333;
  color: #fff;
}
.tools { display: flex; }
.tools button {
  display: grid;
  place-items: center;
  width: 52px;
  height: 32px;
  color: #fff;
}
.tools .open { width: 55px; }
.tools.last { padding-left: 6px; }
.tools.last button { width: 60px; }
.tool-sep { width: 1px; height: 32px; margin: 0 18px; background: #fff; }

.editor-body { flex: 1; min-height: 0; display: flex; }
.palette { flex: 0 0 120px; overflow: hidden; }
.select-wrap { position: relative; }
.select-wrap select { appearance: none; width: 100%; background: #fff; }
.select-wrap svg { position: absolute; right: 7px; top: 50%; margin-top: -3px; pointer-events: none; }
.filter select { height: 32px; border: 0; padding-left: 4px; }
.filter svg { right: 17px; }
.palette h2 {
  height: 30px;
  padding-left: 4px;
  background: #ececec;
  border-bottom: 1px solid var(--green);
  font-size: 14px;
  font-weight: 400;
  line-height: 28px;
}
.commands { display: grid; grid-template-columns: 1fr 1fr; }
.commands button {
  display: flex;
  flex-direction: column;
  align-items: center;
  height: 64px;
  padding-top: 5px;
  font-size: 12px;
  line-height: 24px;
  white-space: nowrap;
}
.commands svg { width: 32px; height: 32px; }
.track {
  flex: 0 0 5px;
  background: #e4e4e4;
  border-right: 1px solid #ccc;
  border-radius: 3px;
}
.thumb { width: 5px; border-radius: 3px; background: var(--green); }
.thumb-palette { height: 267px; }
.thumb-operate { height: 650px; }
.thumb-monitor { height: 181px; }

.code { flex: 1; border-left: 2px solid #b4b4b4; padding: 0 10px 0 9px; }
.file {
  display: flex;
  align-items: center;
  gap: 4px;
  height: 49px;
  padding: 2px 0 0 10px;
  border-bottom: 1px solid var(--green);
  font-size: 16px;
  font-weight: 400;
}
.lines { display: grid; gap: 2px; padding-top: 8px; }
.lines li {
  display: flex;
  align-items: center;
  height: 42px;
  padding-left: 10px;
  border: 1px solid #cdcdd6;
  border-radius: 4px;
}
.lines b { margin-left: 5px; }

/* 3D stage */
.stage {
  position: relative;
  display: flex;
  justify-content: space-between;
  min-width: 0;
  min-height: 0;
  padding: 0 3px 31px 2px;
  background: #c8dcfd;
  border-top: 1px solid #ccc;
  border-left: 1px solid #b8c0cc;
}
.scene { position: absolute; inset: 0; width: 100%; height: 100%; }
.panel-wrap { position: relative; display: flex; margin-top: 49px; }
.panel { overflow: hidden; background: rgba(240, 238, 236, .5); }
.operate { width: 269px; padding: 10px 5px 0 10px; }
.operate hr { margin-right: 5px; }
.tabs-row { display: flex; align-items: center; justify-content: space-between; }
.tabs { display: flex; gap: 1px; }
.tabs button {
  width: 50px;
  height: 30px;
  background: #b4b4b4;
  color: #fff;
  font-weight: 700;
}
.tabs .on { background: var(--blue); }
.pill {
  display: grid;
  place-items: center;
  width: 40px;
  height: 16px;
  border: 1px solid var(--blue);
  border-radius: 8px;
  background: #fff;
  color: var(--blue);
}
.operate .tabs-row { align-items: flex-start; justify-content: flex-end; gap: 5px; padding-right: 5px; margin-bottom: 11px; }
.operate .tabs { flex-direction: column; }
.operate .pill { margin-top: 7px; }
.units { width: 64px; margin: 6px 0 10px auto; line-height: 28px; }
.operate input { display: block; border: 1px solid #767676; border-radius: 2px; background: #fff; height: 24px; padding: 0 3px; }
.joint-inputs { display: grid; gap: 18px; width: 64px; margin: 50px 5px 24px auto; }
.joint-inputs input { width: 64px; }
.operate .name { width: 120px; margin: 10px -1px 10px auto; }
.small { display: block; width: 64px; height: 24px; margin: 0 0 10px auto; background: var(--blue); color: #fff; }
.small.second { margin-top: 54px; }
.operate hr:last-of-type { margin-bottom: 10px; }
.toggle-row { display: flex; justify-content: space-between; height: 28px; }
.toggle-row span { width: 85px; line-height: 24px; text-align-last: justify; }
.toggle-row .small { margin: 0; }

.modes { position: relative; display: flex; gap: 3px; align-items: flex-start; padding-top: 9px; margin-right: 8px; }
.modes button {
  height: 30px;
  padding: 0 5px;
  border: 1px solid #b4b4b4;
  background: #fff;
  color: #b4b4b4;
  font-weight: 700;
}
.modes .on { color: var(--blue); }

.monitor { width: 265px; padding: 10px; }
.monitor .tabs-row { margin-bottom: 11px; }
.monitor section {
  padding: 11px 0 10px;
  border-top: 1px solid var(--green);
  font-size: 12px;
  line-height: 17px;
}
.monitor h3 { font-size: 14px; line-height: 20px; text-align: right; }
.trio { display: grid; grid-template-columns: repeat(3, 80px); padding: 4px 0 6px 5px; }
.trio div { display: grid; grid-template-columns: 16px 1fr; white-space: nowrap; }
.trio dd::before { content: ": "; }
.tool { padding: 4px 0 0 9px; }
.act { display: flex; padding: 0 0 4px 5px; }
.act dt { width: 59px; }
.act dd::before { content: ":"; display: inline-block; width: 26px; }
.line-num { display: flex; padding: 4px 0 5px 3px; }
.line-num dt { width: 60px; }
.line-num dd::before { content: ":"; display: inline-block; width: 13px; }
.monitor .box { padding-top: 10px; }
.io { display: grid; grid-template-columns: 123px 1fr; padding: 5px 0 15px 3px; line-height: 18px; }
.io + .io { padding-top: 0; }
.io label { display: flex; align-items: center; gap: 4px; white-space: nowrap; }
.io input {
  appearance: none;
  width: 11px;
  height: 11px;
  border: 1px solid #bbb;
  border-radius: 50%;
  background: #fff;
}

/* Dialog */
.backdrop { position: fixed; inset: 1px 0 0; z-index: 5; background: rgba(0, 0, 0, .3); }
.modal {
  position: fixed;
  z-index: 6;
  left: 40%;
  top: 76px;
  width: 390px;
  background: #fff;
  box-shadow: 0 1px 6px rgba(0, 0, 0, .3);
}
.modal-head {
  position: relative;
  height: 42px;
  background: var(--blue);
  color: #fff;
}
.modal-head h2 { font-size: 14px; line-height: 42px; text-align: center; }
.close { position: absolute; right: 12px; top: 14px; color: #fff; }
.modal-body { padding: 18px 16px 56px; }
.row { display: flex; justify-content: space-between; margin-bottom: 16px; }
.row label { font-weight: 500; }
.field { display: flex; gap: 16px; width: 131px; }
.field input { flex: none; width: 100px; height: 26px; padding: 0 3px; border: 1px solid #767676; border-radius: 2px; background: #fff; }
.field .long { width: 131px; }
.number { width: 131px; }
.number select { display: block; height: 24px; padding-left: 4px; border: 1px solid #767676; border-radius: 2px; }
.actions { display: flex; justify-content: space-between; margin-bottom: 16px; }
.actions.center { justify-content: center; }
.btn { width: 80px; height: 32px; padding-bottom: 2px; background: var(--blue); color: #fff; font-size: 12px; font-weight: 700; white-space: nowrap; }
.btn.green { background: var(--green); }
.modal-body hr { margin: 28px -8px 16px; }
.modal-foot { display: flex; justify-content: flex-end; padding: 15px; border-top: 1px solid #eee; }
```
